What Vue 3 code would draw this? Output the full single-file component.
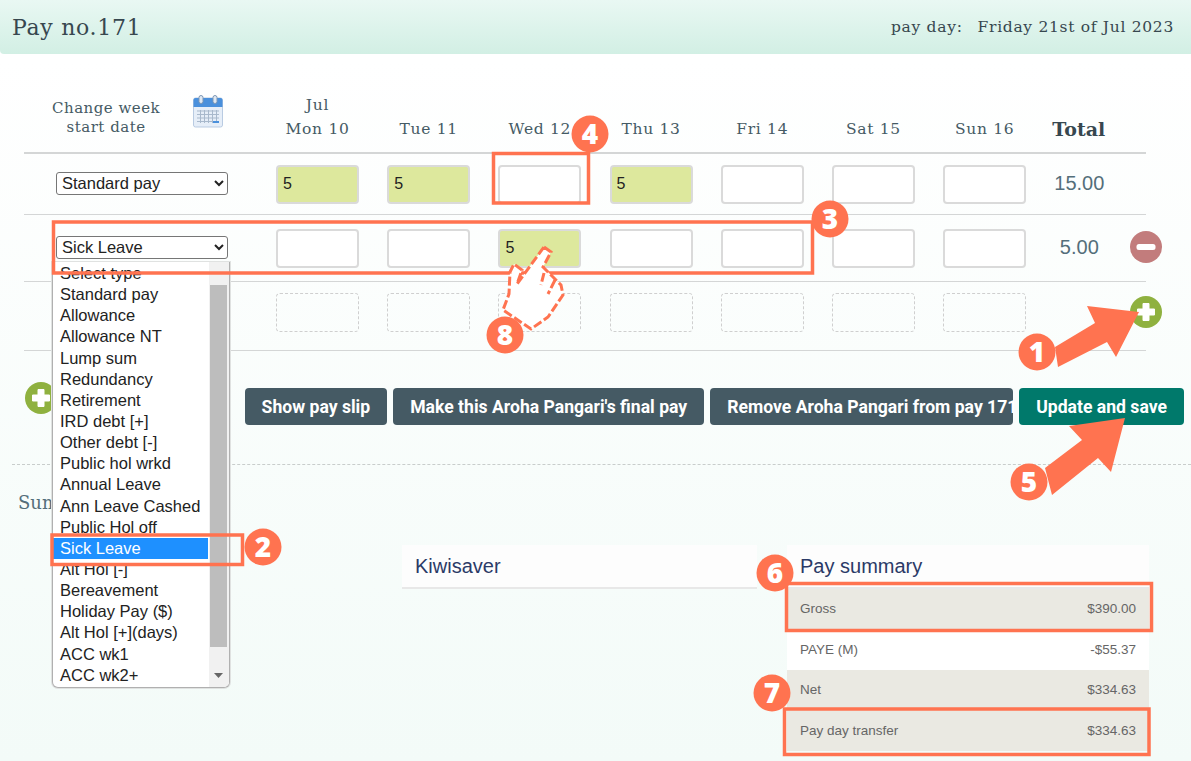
<script setup>
import { ref } from 'vue'

const types = ['Select type', 'Standard pay', 'Allowance', 'Allowance NT', 'Lump sum', 'Redundancy', 'Retirement', 'IRD debt [+]', 'Other debt [-]', 'Public hol wrkd', 'Annual Leave', 'Ann Leave Cashed', 'Public Hol off', 'Sick Leave', 'Alt Hol [-]', 'Bereavement', 'Holiday Pay ($)', 'Alt Hol [+](days)', 'ACC wk1', 'ACC wk2+']

const days = ['Mon 10', 'Tue 11', 'Wed 12', 'Thu 13', 'Fri 14', 'Sat 15', 'Sun 16']

const rows = ref([
  { type: 'Standard pay', hours: ['5', '5', '', '5', '', '', ''], total: '15.00' },
  { type: 'Sick Leave', hours: ['', '', '5', '', '', '', ''], total: '5.00' }
])

const summary = [
  { label: 'Gross', amount: '$390.00', shaded: true },
  { label: 'PAYE (M)', amount: '-$55.37', shaded: false },
  { label: 'Net', amount: '$334.63', shaded: true },
  { label: 'Pay day transfer', amount: '$334.63', shaded: true }
]

const badges = [
  { n: 1, x: 1037, y: 352 },
  { n: 2, x: 263, y: 547 },
  { n: 3, x: 830, y: 219 },
  { n: 4, x: 590, y: 134 },
  { n: 5, x: 1029, y: 482 },
  { n: 6, x: 775, y: 573 },
  { n: 7, x: 772, y: 693 },
  { n: 8, x: 505, y: 335 }
]
</script>

<template>
  <div class="page">
    <header class="top">
      <h1>Pay no.171</h1>
      <p><span class="payday">pay day:</span>Friday 21st of Jul 2023</p>
    </header>

    <section class="table">
      <div class="row head">
        <div class="week">
          <span>Change week<br />start date</span>
          <svg class="cal" width="30" height="33" viewBox="0 0 30 33">
            <rect x="0.5" y="3" width="29" height="29" rx="2" fill="#e6eef8" stroke="#b9cbe2" />
            <path d="M0.5 12V5a2 2 0 0 1 2-2h25a2 2 0 0 1 2 2v7z" fill="#4a90dc" />
            <rect x="6" y="0.5" width="4" height="8" rx="2" fill="#dfe8f2" stroke="#7d97b5" />
            <rect x="20" y="0.5" width="4" height="8" rx="2" fill="#dfe8f2" stroke="#7d97b5" />
            <path d="M4 16h22M4 19.5h22M4 23h22M4 26.500h22M7.500 15v13M11.500 15v13M15.500 15v13M19.500 15v13M23.500 15v13" stroke="#a9b9cc" stroke-width="1" fill="none" />
            <rect x="20" y="26" width="6" height="2" fill="#4a90dc" />
          </svg>
        </div>
        <div v-for="(d, i) in days" :key="d" class="day">
          <span v-if="i === 0">Jul</span>
          <span>{{ d }}</span>
        </div>
        <div class="total-head">Total</div>
      </div>

      <div v-for="(r, idx) in rows" :key="r.type" class="row" :class="idx === 0 ? 'first' : 'second'">
        <div class="type-cell">
          <select v-model="r.type">
            <option v-for="t in types" :key="t">{{ t }}</option>
          </select>
        </div>
        <div v-for="(h, i) in r.hours" :key="i" class="cell">
          <input type="text" :value="h" :class="{ filled: h }" />
        </div>
        <div class="total">
          <span class="amount">{{ r.total }}</span>
          <svg v-if="idx === 1" class="round-btn minus" width="32" height="32" viewBox="0 0 32 32">
            <circle cx="16" cy="16" r="16" fill="#c27c7c" />
            <rect x="6.500" y="13" width="19" height="6" rx="2.500" fill="#fff" />
          </svg>
        </div>
      </div>

      <div class="row third">
        <div class="type-cell"></div>
        <div v-for="d in days" :key="d" class="cell">
          <div class="ghost"></div>
        </div>
        <div class="total">
          <svg class="round-btn plus" width="32" height="32" viewBox="0 0 32 32">
            <circle cx="16" cy="16" r="16" fill="#8fb13f" />
            <path d="M13 7.500h6V13h5.500v6H19v5.500h-6V19H7.500v-6H13z" fill="#fff" stroke="#fff" stroke-linejoin="round" />
          </svg>
        </div>
      </div>
    </section>

    <div class="actions">
      <svg class="add-emp" width="32" height="32" viewBox="0 0 32 32">
        <circle cx="16" cy="16" r="16" fill="#8fb13f" />
        <path d="M13 7.500h6V13h5.500v6H19v5.500h-6V19H7.500v-6H13z" fill="#fff" stroke="#fff" stroke-linejoin="round" />
      </svg>
      <button class="btn">Show pay slip</button>
      <button class="btn">Make this Aroha Pangari's final pay</button>
      <button class="btn tight">Remove Aroha Pangari from pay 171</button>
      <button class="btn save">Update and save</button>
    </div>

    <section class="bottom">
      <h2>Summary</h2>
      <div class="panels">
        <div class="panel">
          <h3>Kiwisaver</h3>
        </div>
        <div class="panel">
          <h3>Pay summary</h3>
          <div v-for="s in summary" :key="s.label" class="sum-row" :class="{ shaded: s.shaded }">
            <span>{{ s.label }}</span>
            <span>{{ s.amount }}</span>
          </div>
        </div>
      </div>
    </section>

    <!-- open select list -->
    <div class="dropdown">
      <ul>
        <li v-for="t in types" :key="t" :class="{ selected: t === 'Sick Leave' }">{{ t }}</li>
      </ul>
      <div class="scrollbar">
        <div class="thumb"></div>
        <svg class="scroll-down" width="9" height="5" viewBox="0 0 9 5"><path d="M0 0h9L4.500 5z" fill="#666" /></svg>
      </div>
    </div>

    <!-- tutorial annotations -->
    <svg class="notes" width="1191" height="761" viewBox="0 0 1191 761">
      <g fill="none" stroke="#ff7350" stroke-width="3.500">
        <rect x="493.500" y="153.500" width="95" height="49.500" />
        <rect x="53.500" y="222" width="759" height="51" />
        <rect x="52" y="535" width="190.500" height="29.500" />
        <rect x="786.500" y="583.500" width="365" height="47" />
        <rect x="784.500" y="709" width="364.500" height="45.500" />
      </g>
      <polygon points="1139,312 1087,306 1095,323 1055,347 1058,367 1107,342 1116,357" fill="#ff7350" />
      <polygon points="1125,418 1069,426 1082,440 1045,468 1052,495 1098,458 1111,472" fill="#ff7350" />
      <g fill="#fff" stroke="#ff7350" stroke-width="3" stroke-dasharray="9 3" stroke-linejoin="miter">
        <path d="M544 247L551 252L543 267L552 276L561 285L563 295L548 317L531 329L503 310L509 294L510 272L514 264L522 270L517 284z" />
        <path d="M544 273L541 285M555 280L548 294" fill="none" />
      </g>
      <g v-for="b in badges" :key="b.n">
        <circle :cx="b.x" :cy="b.y" r="18.500" fill="#ff7350" />
        <text :x="b.x" :y="b.y + 10" text-anchor="middle" class="badge">{{ b.n }}</text>
      </g>
    </svg>
  </div>
</template>

<style scoped>
.page {
  position: relative;
  width: 1191px;
  height: 761px;
  overflow: hidden;
  background: linear-gradient(#ffffff 60px, #f3fbf8);
  font-family: "Liberation Sans", Arial, sans-serif;
}

.top {
  height: 54px;
  box-sizing: border-box;
  padding: 0 17px 0 12px;
  display: flex;
  align-items: center;
  justify-content: space-between;
  background: linear-gradient(#e9f8f3, #d2efe4);
  border-bottom-left-radius: 4px;
  font-family: "DejaVu Serif", serif;
  color: #37474f;
}

.top h1 {
  margin: 0;
  font-size: 22px;
  font-weight: 400;
  letter-spacing: 0.7px;
}

.top p {
  margin: 0;
  font-size: 15.500px;
  letter-spacing: 0.7px;
}

.payday {
  margin-right: 15px;
}

.table {
  margin: 38px 45px 0 24px;
}

.row {
  display: grid;
  grid-template-columns: 252px repeat(7, 111.200px) 1fr;
  align-items: center;
  border-bottom: 1px solid #d4d6d6;
}

.head {
  height: 60px;
  border-bottom-width: 2px;
  font-family: "DejaVu Serif", serif;
  color: #455a64;
  font-size: 15.500px;
  letter-spacing: 0.7px;
}

.first {
  height: 60px;
}

.second {
  height: 66px;
}

.third {
  height: 69px;
  padding-bottom: 8px;
  box-sizing: border-box;
}

.week {
  display: flex;
  align-items: flex-start;
  margin-top: -9px;
  padding-left: 28px;
  text-align: center;
  font-size: 15px;
  letter-spacing: 0.5px;
  line-height: 19px;
}

.cal {
  margin-left: 33px;
  margin-top: -4px;
}

.day {
  width: 83px;
  display: flex;
  flex-direction: column;
  align-items: center;
  align-self: end;
  padding-bottom: 11px;
  line-height: 24px;
}

.total-head {
  align-self: end;
  margin-left: -2px;
  padding-bottom: 11px;
  font-weight: 700;
  font-size: 19px;
  letter-spacing: 0;
  line-height: 24px;
  color: #37474f;
}

.type-cell {
  padding-left: 32px;
}

select {
  display: block;
  width: 172px;
  height: 23px;
  margin-top: -2px;
  padding-left: 1px;
  font-family: "Liberation Sans", Arial, sans-serif;
  font-size: 16.500px;
  background: #fff;
  color: #222;
  border: 1px solid #767676;
  border-radius: 3px;
}

.cell input,
.ghost {
  display: block;
  box-sizing: border-box;
  width: 83px;
  height: 39px;
  border-radius: 4px;
}

.cell input {
  padding: 0 5px;
  border: 2px solid #dadada;
  background: #fff;
  font-family: "Liberation Sans", Arial, sans-serif;
  font-size: 16px;
  color: #222;
}

.cell input.filled {
  background: #dde89d;
}

.ghost {
  border: 1px dashed #cfcfcf;
}

.total {
  position: relative;
  margin-top: -2px;
  font-size: 20px;
  color: #546e7a;
}

.amount {
  display: inline-block;
  width: 50px;
  text-align: center;
}

.round-btn {
  position: absolute;
  left: 76px;
}

.minus {
  top: -5px;
}

.plus {
  top: -15px;
}

.actions {
  display: flex;
  align-items: flex-start;
  gap: 6px;
  margin-top: 37px;
  padding: 0 7px 0 25px;
}

.add-emp {
  margin: -6px auto 0 0;
}

.btn {
  height: 37px;
  padding: 0 17px;
  border: 0;
  border-radius: 4px;
  background: #455a64;
  color: #fff;
  font-family: Roboto, sans-serif;
  font-weight: 700;
  font-size: 17.600px;
  white-space: nowrap;
}

.tight {
  width: 303px;
  padding-right: 0;
  text-align: left;
}

.save {
  background: #00796b;
}

.bottom {
  margin: 39px 0 0 12px;
  padding: 28px 0 0 6px;
  border-top: 1px dashed #c9cdcc;
}

.bottom h2 {
  margin: 0;
  font-family: "DejaVu Serif", serif;
  font-weight: 400;
  font-size: 18px;
  line-height: 20px;
  color: #546e7a;
}

.panels {
  display: grid;
  grid-template-columns: 355px 362px;
  column-gap: 30px;
  align-items: start;
  margin-top: 32px;
  padding-left: 384px;
}

.panel h3 {
  margin: 0;
  height: 44px;
  box-sizing: border-box;
  padding: 9px 13px 0;
  background: #fdfdfd;
  border-bottom: 2px solid #e8e8e8;
  font-size: 20px;
  font-weight: 400;
  line-height: 24px;
  color: #2b3a67;
}

.sum-row {
  height: 40.500px;
  box-sizing: border-box;
  display: flex;
  align-items: center;
  justify-content: space-between;
  padding: 0 13px 1px;
  background: #fff;
  font-size: 13.500px;
  color: #666;
}

.shaded {
  background: #eae9e2;
}

.dropdown {
  position: absolute;
  left: 52px;
  top: 262px;
  width: 176px;
  height: 425px;
  overflow: hidden;
  display: flex;
  background: #fff;
  border: 1px solid #b0b0b0;
  border-top: 0;
  border-radius: 0 0 6px 6px;
  box-shadow: 0 0 0 1px #e0e2e1;
  font-size: 16.500px;
  color: #222;
}

.dropdown ul {
  flex: 1;
  margin: 0;
  padding: 1px 0 0;
  list-style: none;
}

.dropdown li {
  height: 21.150px;
  line-height: 21.150px;
  padding-left: 7px;
  white-space: nowrap;
}

.dropdown li.selected {
  background: #1e90ff;
  color: #fff;
  margin-right: 1px;
}

.scrollbar {
  position: relative;
  width: 20px;
  background: #f1f1f1;
}

.thumb {
  position: absolute;
  left: 1px;
  right: 2px;
  top: 23px;
  height: 362px;
  background: #bdbdbd;
}

.scroll-down {
  position: absolute;
  left: 5px;
  bottom: 9px;
}

.notes {
  position: absolute;
  left: 0;
  top: 0;
  pointer-events: none;
}

.badge {
  font-family: "Open Sans", sans-serif;
  font-weight: 800;
  font-size: 28px;
  fill: #fff;
}
</style>

<style>
html,
body {
  margin: 0;
  background: #f3fbf8;
}
</style>
